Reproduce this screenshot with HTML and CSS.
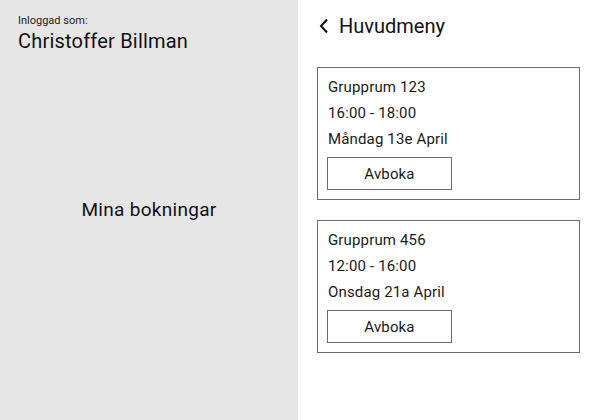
FILE: index.html
```html
<!DOCTYPE html>
<html lang="sv">
<head>
<meta charset="utf-8">
<title>Mina bokningar</title>
<link rel="stylesheet" href="styles.css">
</head>
<body>
<div class="app">
  <aside class="side">
    <div class="user">
      <div class="user-label">Inloggad som:</div>
      <div class="user-name">Christoffer Billman</div>
    </div>
    <div class="side-title">Mina bokningar</div>
  </aside>
  <main class="main">
    <div class="back">
      <svg class="chev" width="10" height="16" viewBox="0 0 10 16"><path d="M8 1.5 L2 8 L8 14.5" fill="none" stroke="#111" stroke-width="2"/></svg>
      <span>Huvudmeny</span>
    </div>
    <div class="list">
      <div class="card">
        <div class="line">Grupprum 123</div>
        <div class="line">16:00 - 18:00</div>
        <div class="line">Måndag 13e April</div>
        <button class="btn">Avboka</button>
      </div>
      <div class="card">
        <div class="line">Grupprum 456</div>
        <div class="line">12:00 - 16:00</div>
        <div class="line">Onsdag 21a April</div>
        <button class="btn">Avboka</button>
      </div>
    </div>
  </main>
</div>
</body>
</html>
```
FILE: styles.css
```css
* { box-sizing: border-box; }
html, body { margin: 0; padding: 0; }
body {
  font-family: Roboto, "Liberation Sans", sans-serif;
  color: #111;
  background: #fff;
}
.app {
  display: flex;
  width: 595px;
  height: 420px;
}
.side {
  width: 298px;
  flex: none;
  background: #e6e6e6;
  display: grid;
  grid-template-rows: 1fr auto 1fr;
  padding: 0 18px;
}
.user {
  align-self: start;
  padding-top: 14px;
}
.user-label {
  font-size: 11px;
  line-height: 14px;
  color: #222;
}
.user-name {
  font-size: 20px;
  line-height: 24px;
  margin-top: 1px;
  letter-spacing: 0.2px;
}
.side-title {
  text-align: center;
  font-size: 19px;
  line-height: 24px;
  letter-spacing: 0.3px;
}
.main {
  flex: 1;
  padding: 14px 15px 0 19px;
}
.back {
  display: flex;
  align-items: center;
  gap: 10px;
  font-size: 20px;
  line-height: 24px;
  height: 24px;
  padding-left: 2px;
}
.chev { display: block; }
.list {
  margin-top: 29px;
  display: flex;
  flex-direction: column;
  gap: 20px;
}
.card {
  border: 1px solid #6b6b6b;
  padding: 6px 9px 9px 9px;
  height: 133px;
}
.line {
  font-size: 15px;
  line-height: 26px;
  padding-left: 1px;
  letter-spacing: 0.15px;
  color: #1a1a1a;
}
.btn {
  display: block;
  margin-top: 5px;
  width: 125px;
  height: 33px;
  border: 1px solid #6b6b6b;
  background: #fff;
  font-family: inherit;
  font-size: 15px;
  letter-spacing: 0.15px;
  color: #1a1a1a;
  padding: 0;
}
```
